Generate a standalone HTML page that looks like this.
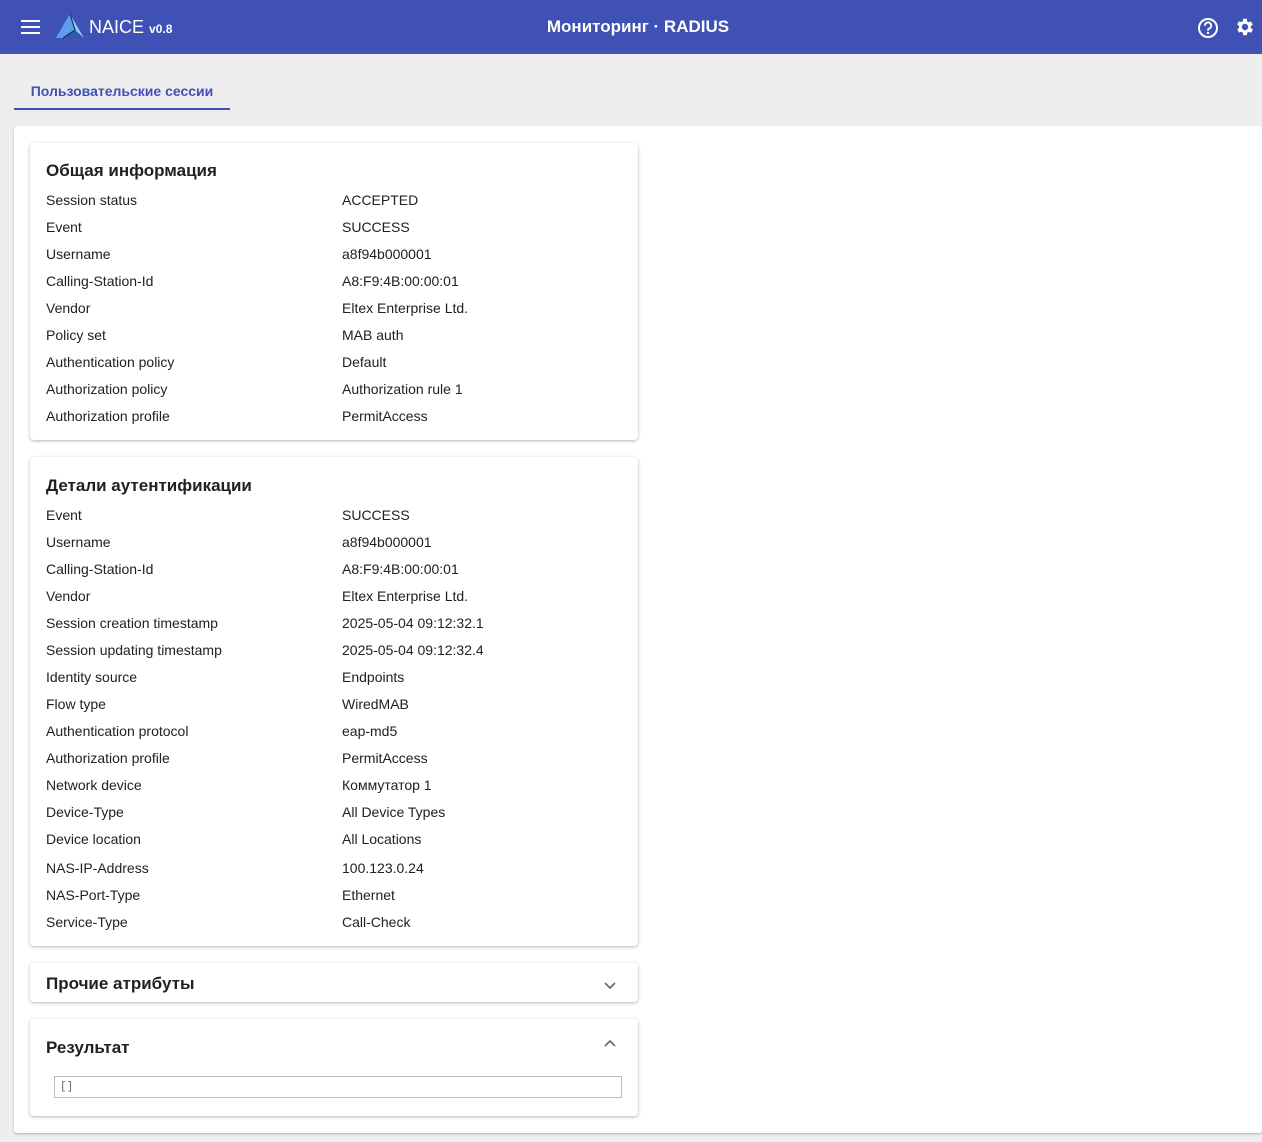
<!DOCTYPE html>
<html><head><meta charset="utf-8"><style>
*{box-sizing:border-box;margin:0;padding:0}
body{width:1262px;height:1142px;background:#eee;font-family:"Liberation Sans","Noto Sans CJK SC",sans-serif;color:#212121;position:relative;overflow:hidden}
.hdr{position:absolute;left:0;top:0;width:1262px;height:54px;background:#3f51b5;color:#fff}
.tab{position:absolute;left:14px;top:78px;width:216px;height:32px;border-bottom:2px solid #3f51b5;color:#3f51b5;font-size:14px;font-weight:bold;text-align:center;line-height:26px}
.panel{position:absolute;left:14px;top:126px;width:1248px;height:1007px;background:#fff;border-radius:3px;box-shadow:0 1px 2px rgba(0,0,0,.25)}
.card{position:absolute;left:30px;width:608px;background:#fff;border-radius:4px;box-shadow:0 1px 3px rgba(0,0,0,.3)}
.t{position:absolute;left:16px;font-size:17px;font-weight:bold;color:#212121}
.r{position:absolute;left:16px;font-size:14px;line-height:18px}
.r span{position:absolute;left:296px;white-space:nowrap}
.r b{font-weight:normal;white-space:nowrap}
</style></head><body>
<div class="hdr">
<svg style="position:absolute;left:21px;top:20px" width="19" height="14"><rect y="0" width="19" height="2" fill="#fff"/><rect y="6" width="19" height="2" fill="#fff"/><rect y="12" width="19" height="2" fill="#fff"/></svg>
<svg style="position:absolute;left:55px;top:13px" width="30" height="26" viewBox="0 0 30 26"><polygon points="15,1 29,25 1,25" fill="#90caf9"/><polygon points="15,1 20,17 8,25 1,25" fill="#5c9ee8"/><polygon points="8,25 20,17 29,25" fill="#2e5aa8"/><polyline points="15,1 20,17 8,25" fill="none" stroke="#1a2e6e" stroke-width="1.2"/></svg>
<div style="position:absolute;left:89px;top:17px;font-size:18px">NAICE <span style="font-size:12px;font-weight:bold">v0.8</span></div>
<div style="position:absolute;left:0;width:1276px;top:17px;text-align:center;font-size:17px;font-weight:bold">Мониторинг · RADIUS</div>
<svg style="position:absolute;left:1197px;top:17px" width="22" height="22" viewBox="0 0 22 22"><circle cx="11" cy="11" r="9" fill="none" stroke="#fff" stroke-width="2"/><path d="M7.8 8.6a3.2 3.2 0 1 1 4.4 3c-.9.4-1.2 1-1.2 2" fill="none" stroke="#fff" stroke-width="2"/><circle cx="11" cy="16" r="1.2" fill="#fff"/></svg>
<svg style="position:absolute;left:1234px;top:16px" width="22" height="22" viewBox="0 0 24 24"><path fill="#fff" d="M19.4 13a7.5 7.5 0 0 0 0-2l2.1-1.6-2-3.5-2.5 1a7 7 0 0 0-1.7-1L15 3h-4l-.4 2.7a7 7 0 0 0-1.7 1l-2.5-1-2 3.5L6.6 11a7.5 7.5 0 0 0 0 2l-2.1 1.6 2 3.5 2.5-1a7 7 0 0 0 1.7 1L11 21h4l.4-2.7a7 7 0 0 0 1.7-1l2.5 1 2-3.5zM13 15.5a3.5 3.5 0 1 1 0-7 3.5 3.5 0 0 1 0 7z" transform="translate(-1 0)"/></svg>
</div>
<div class="tab">Пользовательские сессии</div>
<div class="panel"></div>

<div class="card" style="top:143px;height:297px">
<div class="t" style="top:18px">Общая информация</div>
<div class="r" style="top:48px"><b>Session status</b><span>ACCEPTED</span></div>
<div class="r" style="top:75px"><b>Event</b><span>SUCCESS</span></div>
<div class="r" style="top:102px"><b>Username</b><span>a8f94b000001</span></div>
<div class="r" style="top:129px"><b>Calling-Station-Id</b><span>A8:F9:4B:00:00:01</span></div>
<div class="r" style="top:156px"><b>Vendor</b><span>Eltex Enterprise Ltd.</span></div>
<div class="r" style="top:183px"><b>Policy set</b><span>MAB auth</span></div>
<div class="r" style="top:210px"><b>Authentication policy</b><span>Default</span></div>
<div class="r" style="top:237px"><b>Authorization policy</b><span>Authorization rule 1</span></div>
<div class="r" style="top:264px"><b>Authorization profile</b><span>PermitAccess</span></div>
</div>

<div class="card" style="top:457px;height:489px">
<div class="t" style="top:19px">Детали аутентификации</div>
<div class="r" style="top:49px"><b>Event</b><span>SUCCESS</span></div>
<div class="r" style="top:76px"><b>Username</b><span>a8f94b000001</span></div>
<div class="r" style="top:103px"><b>Calling-Station-Id</b><span>A8:F9:4B:00:00:01</span></div>
<div class="r" style="top:130px"><b>Vendor</b><span>Eltex Enterprise Ltd.</span></div>
<div class="r" style="top:157px"><b>Session creation timestamp</b><span>2025-05-04 09:12:32.1</span></div>
<div class="r" style="top:184px"><b>Session updating timestamp</b><span>2025-05-04 09:12:32.4</span></div>
<div class="r" style="top:211px"><b>Identity source</b><span>Endpoints</span></div>
<div class="r" style="top:238px"><b>Flow type</b><span>WiredMAB</span></div>
<div class="r" style="top:265px"><b>Authentication protocol</b><span>eap-md5</span></div>
<div class="r" style="top:292px"><b>Authorization profile</b><span>PermitAccess</span></div>
<div class="r" style="top:319px"><b>Network device</b><span>Коммутатор 1</span></div>
<div class="r" style="top:346px"><b>Device-Type</b><span>All Device Types</span></div>
<div class="r" style="top:373px"><b>Device location</b><span>All Locations</span></div>
<div class="r" style="top:402px"><b>NAS-IP-Address</b><span>100.123.0.24</span></div>
<div class="r" style="top:429px"><b>NAS-Port-Type</b><span>Ethernet</span></div>
<div class="r" style="top:456px"><b>Service-Type</b><span>Call-Check</span></div>
</div>

<div class="card" style="top:963px;height:39px">
<div class="t" style="top:11px">Прочие атрибуты</div>
<svg style="position:absolute;left:574px;top:19px" width="12" height="8"><polyline points="1,1 6,6 11,1" fill="none" stroke="#666" stroke-width="1.6"/></svg>
</div>

<div class="card" style="top:1019px;height:97px">
<div class="t" style="top:19px">Результат</div>
<svg style="position:absolute;left:574px;top:20px" width="12" height="8"><polyline points="1,7 6,2 11,7" fill="none" stroke="#666" stroke-width="1.6"/></svg>
<div style="position:absolute;left:24px;top:57px;width:568px;height:22px;border:1px solid #bbb;font-family:'Liberation Mono',monospace;font-size:11px;color:#666;padding:4px 5px">[]</div>
</div>
</body></html>
